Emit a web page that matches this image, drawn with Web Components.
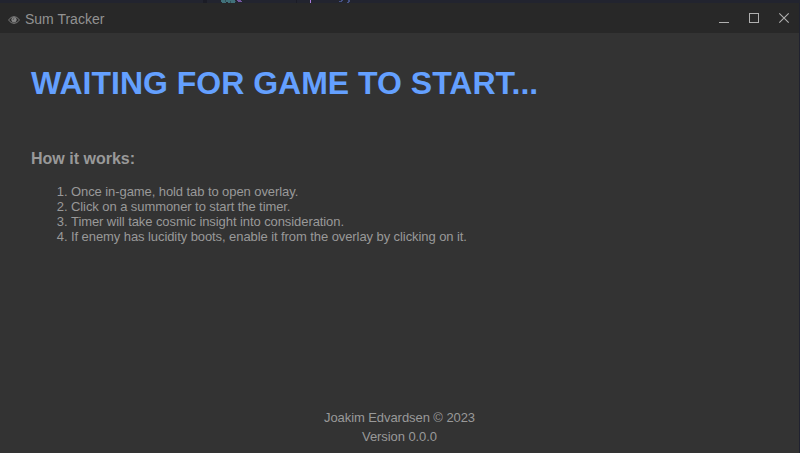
<!DOCTYPE html>
<html lang="en">
<head>
<meta charset="utf-8">
<title>Sum Tracker</title>
<style>
html,body{margin:0;height:100%;overflow:hidden;background:#202230;font-family:"Liberation Sans",Arial,sans-serif}
</style>
</head>
<body>
<tracker-app></tracker-app>
<script>
function define(name, markup) {
  const template = document.createElement('template');
  template.innerHTML = markup;
  customElements.define(name, class extends HTMLElement {
    constructor() {
      super();
      this.attachShadow({ mode: 'open' }).append(template.content.cloneNode(true));
    }
  });
}

/* Sliver of the desktop visible above the window */
define('desktop-edge', `
<style>:host{display:block;height:3px;background:#22242f}svg{display:block}</style>
<svg width="800" height="3" shape-rendering="crispEdges">
<path fill="#1b1c26" d="M203 0h4v3h-4zM296 0h1v3h-1z"/>
<path fill="#41717a" d="M221 0h14v2h-14zM222 2h4v1h-4zM228 2h7v1h-7z"/>
<path fill="#315059" d="M225 0h1v2h-1zM230 1h1v2h-1zM235 1h1v1h-1z"/>
<path fill="#7658a0" d="M237 0h4v1h-4zM238 1h4v1h-4z"/>
<path fill="#aa7bdc" d="M310 0h1v3h-1z"/>
<path fill="#465386" d="M341 0h2v1h-2zM339 1h3v1h-3zM348 0h2v2h-2zM347 2h2v1h-2z"/>
</svg>`);

define('eye-icon', `
<style>:host{display:block;width:12px;height:8px}svg{display:block}</style>
<svg width="12" height="8" viewBox="0 0 12 8" fill="none" stroke="#929292">
<path stroke-width=".8" d="M.5 4Q3 .6 6 .6T11.5 4Q9 7.400 6 7.400T.5 4Z"/>
<circle cx="6" cy="3.800" r="2.300" fill="#858585" stroke-width=".7"/>
<path d="M5 3.800Q5 2.600 6.200 2.600" stroke="#333" stroke-width=".7"/>
</svg>`);

define('window-controls', `
<style>:host{display:flex}svg{display:block;width:30px;height:30px}</style>
<svg viewBox="0 0 30 30" shape-rendering="crispEdges"><path fill="#b0b0b0" d="M9 19h10v1H9z"/></svg>
<svg viewBox="0 0 30 30" shape-rendering="crispEdges"><path fill="none" stroke="#b0b0b0" d="M9.500 10.500h9v9h-9z"/></svg>
<svg viewBox="0 0 30 30"><path fill="none" stroke="#b0b0b0" stroke-width="1.100" d="M9.300 10.300l9.400 9.400M18.700 10.300l-9.400 9.400"/></svg>`);

define('title-bar', `
<style>
:host{display:flex;align-items:center;height:30px;padding-left:8px;background:#282828;color:#929292;font-size:14px;box-sizing:border-box}
.name{margin-left:5px;line-height:16px;padding-top:2px}
eye-icon{margin-top:3px}
window-controls{margin-left:auto;margin-right:-1px}
</style>
<eye-icon></eye-icon><span class="name"><slot></slot></span><window-controls></window-controls>`);

define('game-status', `
<style>:host{display:block}h1{margin:0;font-size:32px;line-height:38px;color:#64a0ff;white-space:nowrap}</style>
<h1><slot></slot></h1>`);

define('how-it-works', `
<style>
:host{display:block;color:#999}
h2{margin:0 0 16px;font-size:16px;line-height:18px}
ol{margin:0;padding-left:40px;font-size:13px;line-height:15px;letter-spacing:-.08px}
</style>
<h2>How it works:</h2>
<ol>
<li>Once in-game, hold tab to open overlay.</li>
<li>Click on a summoner to start the timer.</li>
<li>Timer will take cosmic insight into consideration.</li>
<li>If enemy has lucidity boots, enable it from the overlay by clicking on it.</li>
</ol>`);

define('app-footer', `
<style>:host{display:block;text-align:center;font-size:13px;line-height:19px;letter-spacing:-.07px;color:#999}</style>
<div>Joakim Edvardsen © 2023</div><div>Version 0.0.0</div>`);

define('tracker-app', `
<style>
:host{display:flex;flex-direction:column;height:453px}
.window{flex:1;display:flex;flex-direction:column;margin-right:1px;background:#333}
main{flex:1;display:flex;flex-direction:column;padding:31px 31px 7px}
how-it-works{margin-top:48px}
app-footer{margin-top:auto}
</style>
<desktop-edge></desktop-edge>
<div class="window">
<title-bar>Sum Tracker</title-bar>
<main><game-status>WAITING FOR GAME TO START...</game-status><how-it-works></how-it-works><app-footer></app-footer></main>
</div>`);
</script>
</body>
</html>
